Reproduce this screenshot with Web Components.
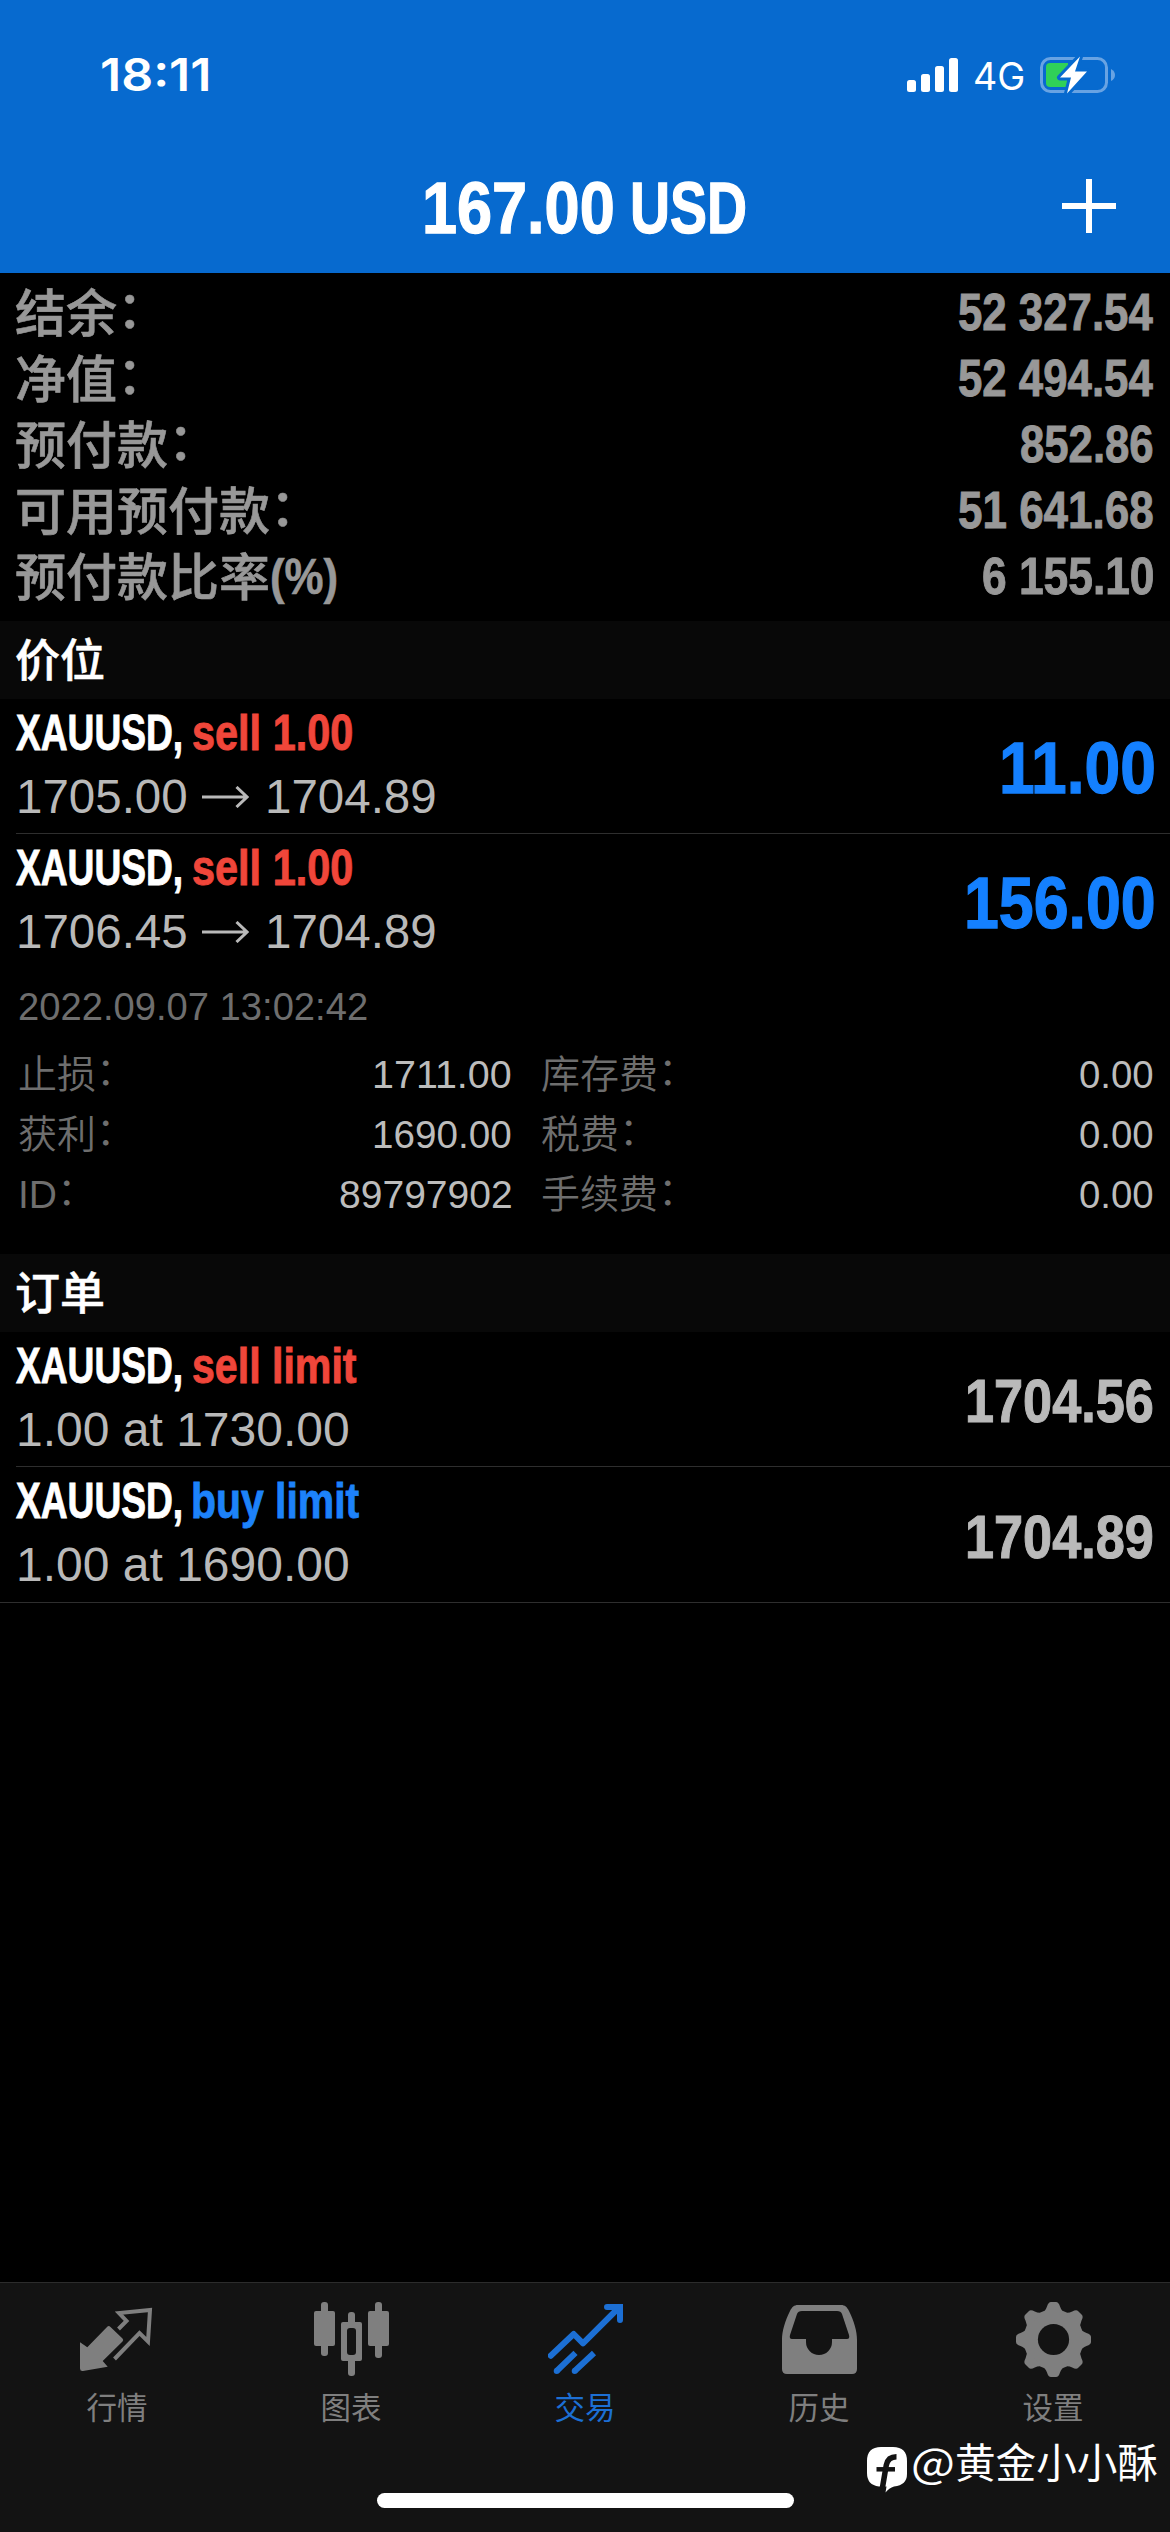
<!DOCTYPE html>
<html lang="zh-CN">
<head>
<meta charset="utf-8">
<title>Trade</title>
<style>
  html, body {
    margin: 0;
    background: #000;
  }

  body {
    font-family: "Liberation Sans", "Noto Sans CJK SC", sans-serif;
    width: 1170px;
    height: 2532px;
    overflow: hidden;
  }
</style>
</head>
<body>
<trade-screen></trade-screen>

<script>
const makeTemplate = (html) => {
  const template = document.createElement('template');
  template.innerHTML = html;
  return template;
};

const measureContext = document.createElement('canvas').getContext('2d');

// Text squeezed to a given ink width, the box is as wide as the ink.
class FitText extends HTMLElement {
  constructor() {
    super();
    this.attachShadow({ mode: 'open' });
    this.shadowRoot.innerHTML = `
      <style>
        :host{
          display: block;
          flex: none;
          white-space: nowrap;
        }

        span{
          display: inline-block;
          transform-origin: 0 0;
        }
      </style>
      <span><slot></slot></span>
    `;
  }

  connectedCallback() {
    const width = Number(this.getAttribute('width'));
    const $span = this.shadowRoot.querySelector('span');
    const style = getComputedStyle(this);
    measureContext.font = `${style.fontWeight} ${style.fontSize} ${style.fontFamily}`;

    const box = measureContext.measureText(this.textContent);
    const scale = width / (box.actualBoundingBoxLeft + box.actualBoundingBoxRight);
    this.style.width = `${width}px`;
    $span.style.marginLeft = `${box.actualBoundingBoxLeft * scale}px`;
    $span.style.transform = `scaleX(${scale})`;
  }
}

// Chinese label with an optional colon, raised to the middle of the line.
class FieldLabel extends HTMLElement {
  constructor() {
    super();
    this.attachShadow({ mode: 'open' });
    this.shadowRoot.innerHTML = `
      <style>
        :host{
          display: flex;
          white-space: nowrap;
        }

        .colon{
          display: none;
          transform: translateY(-0.07em);
        }

        :host([colon]) .colon{
          display: block;
        }
      </style>
      <slot></slot><span class="colon">：</span>
    `;
  }
}

class StatusBar extends HTMLElement {
  constructor() {
    super();
    this.attachShadow({ mode: 'open' });
    this.shadowRoot.innerHTML = `
      <style>
        :host{
          display: flex;
          align-items: center;
          height: 150px;
          box-sizing: border-box;
          padding: 0 55px 0 102px;
          color: #fff;
          font-family: Inter, sans-serif;
        }

        .time{
          font-size: 44.5px;
          font-weight: 600;
          margin-right: auto;
        }

        .net{
          font-size: 38px;
          font-weight: 400;
          margin: 2px 17px 0;
        }

        svg{
          display: block;
          flex: none;
        }
      </style>
      <fit-text class="time" width="106">18:11</fit-text>
      <svg width="51" height="34" fill="#fff">
        <rect x="0" y="22" width="9" height="12" rx="2.5"/>
        <rect x="14" y="16" width="9" height="18" rx="2.5"/>
        <rect x="28" y="8" width="9" height="26" rx="2.5"/>
        <rect x="42" y="0" width="9" height="34" rx="2.5"/>
      </svg>
      <fit-text class="net" width="48">4G</fit-text>
      <svg width="75" height="38" viewBox="0 0 75 38">
        <rect x="1.5" y="2.5" width="65" height="33" rx="9" fill="none" stroke="#68a3e3" stroke-width="3"/>
        <path d="M71 13 Q75 15 75 19 Q75 23 71 25Z" fill="#68a3e3"/>
        <path d="M10 7 H28 V31 H10 Q6 31 6 27 V11 Q6 7 10 7Z" fill="#30d158"/>
        <path d="M40 0.5 L20 21.5 H31 L27 37.5 L47 15.5 H35Z" fill="#fff" stroke="#076acf" stroke-width="6" stroke-linejoin="round" paint-order="stroke"/>
      </svg>
    `;
  }
}

class NavBar extends HTMLElement {
  constructor() {
    super();
    this.attachShadow({ mode: 'open' });
    this.shadowRoot.innerHTML = `
      <style>
        :host{
          display: grid;
          grid-template-columns: 1fr auto 1fr;
          align-items: center;
          height: 123px;
          box-sizing: border-box;
          padding: 0 54px 8px;
          color: #fff;
          font-size: 73px;
          font-weight: 700;
          line-height: 90px;
          -webkit-text-stroke: 0.018em currentColor;
        }

        .title{
          grid-column: 2;
          display: flex;
          gap: 21px;
        }

        svg{
          justify-self: end;
          margin-bottom: 3px;
        }
      </style>
      <div class="title"><slot></slot></div>
      <svg width="54" height="54" stroke="#fff" stroke-width="6">
        <path d="M27 0 V54 M0 27 H54"/>
      </svg>
    `;
  }
}

class SummaryRow extends HTMLElement {
  constructor() {
    super();
    this.attachShadow({ mode: 'open' });
    this.shadowRoot.innerHTML = `
      <style>
        :host{
          display: flex;
          justify-content: space-between;
          line-height: 66.1px;
          height: 66.1px;
          padding: 0 17px 0 15px;
          color: #989898;
          font-size: 52px;
          font-weight: 700;
          -webkit-text-stroke: 0.018em currentColor;
        }

        field-label{
          font-size: 51px;
          font-weight: 500;
          margin-top: 3px;
          -webkit-text-stroke: 0.012em currentColor;
        }
      </style>
      <field-label><slot name="label"></slot></field-label>
      <slot></slot>
    `;
    this.shadowRoot.querySelector('field-label').toggleAttribute('colon', !this.hasAttribute('plain'));
  }
}

class SectionTitle extends HTMLElement {
  constructor() {
    super();
    this.attachShadow({ mode: 'open' });
    this.shadowRoot.innerHTML = `
      <style>
        :host{
          display: block;
          height: 78px;
          box-sizing: border-box;
          padding: 2px 15px 0;
          background: #080808;
          color: #fff;
          font-size: 45px;
          font-weight: 500;
          line-height: 77px;
          -webkit-text-stroke: 0.012em currentColor;
        }
      </style>
      <slot></slot>
    `;
  }
}

class TradeRow extends HTMLElement {
  constructor() {
    super();
    this.attachShadow({ mode: 'open' });
    this.shadowRoot.innerHTML = `
      <style>
        :host{
          display: flex;
          justify-content: space-between;
          height: 135px;
          box-sizing: border-box;
          margin-left: 16px;
          padding: 2px 17px 0 0;
          border-bottom: 1px solid #2e2e2e;
          line-height: 64px;
        }

        :host([open]){
          border-bottom-color: transparent;
        }

        :host([last]){
          border-bottom: none;
        }

        .title, .detail{
          display: flex;
          height: 64px;
        }

        .title{
          gap: 12px;
          color: #fff;
          font-size: 50px;
          font-weight: 700;
          -webkit-text-stroke: 0.018em currentColor;
        }

        .detail{
          align-items: center;
          padding-left: 3px;
          color: #b9b9b9;
          font-size: 48px;
        }

        .value{
          align-self: center;
          padding-top: 2px;
          line-height: 100px;
          font-weight: 700;
          font-size: 62px;
          color: #b9b9b9;
          -webkit-text-stroke: 0.018em currentColor;
        }

        :host([profit]) .value{
          font-size: 73px;
          color: #1480ff;
        }

        .kind{
          color: #f0463a;
          -webkit-text-stroke: 0.018em currentColor;
        }

        :host([buy]) .kind{
          color: #1d82fa;
        }
      </style>
      <div>
        <div class="title"><fit-text width="165">XAUUSD,</fit-text><div class="kind"><slot name="kind"></slot></div></div>
        <div class="detail"><slot name="detail"></slot></div>
      </div>
      <div class="value"><slot name="value"></slot></div>
    `;
  }
}

class PriceArrow extends HTMLElement {
  constructor() {
    super();
    this.attachShadow({ mode: 'open' });
    this.shadowRoot.innerHTML = `
      <style>
        :host{
          display: block;
          margin: 0 19px 0 16px;
        }

        svg{
          display: block;
        }
      </style>
      <svg width="47" height="22" fill="none" stroke="currentColor" stroke-width="3">
        <path d="M0 11 H45 M34.5 1 L45 11 L34.5 21"/>
      </svg>
    `;
  }
}

class PositionDetails extends HTMLElement {
  constructor() {
    super();
    this.attachShadow({ mode: 'open' });
    this.shadowRoot.innerHTML = `
      <style>
        :host{
          display: block;
          height: 285px;
          box-sizing: border-box;
          padding: 8px 17px 0 18px;
          color: #6e6e6e;
          font-size: 39px;
          line-height: 60px;
        }

        .date{
          font-size: 38px;
          margin: 0 0 7.5px 1px;
        }

        .columns{
          display: grid;
          grid-template-columns: 493px 1fr;
          column-gap: 30px;
        }

        .columns > div{
          display: flex;
          justify-content: space-between;
        }

        field-label{
          font-weight: 350;
        }

        .columns fit-text{
          color: #bcbcbc;
        }
      </style>
      <fit-text class="date" width="348">2022.09.07 13:02:42</fit-text>
      <div class="columns">
        <div><field-label colon>止损</field-label><fit-text width="137">1711.00</fit-text></div>
        <div><field-label colon>库存费</field-label><fit-text width="73">0.00</fit-text></div>
        <div><field-label colon>获利</field-label><fit-text width="137">1690.00</fit-text></div>
        <div><field-label colon>税费</field-label><fit-text width="73">0.00</fit-text></div>
        <div><field-label colon>ID</field-label><fit-text width="171">89797902</fit-text></div>
        <div><field-label colon>手续费</field-label><fit-text width="73">0.00</fit-text></div>
      </div>
    `;
  }
}

const tooth = 'M25.5 11 Q29.5 9 31 4.5 Q32.3 0 35 0 H40 Q42.7 0 44 4.5 Q45.5 9 49.5 11Z';

const icons = {
  quotes: `
    <path d="M38.5 27 L46.5 19 L39 11 L70 8 L68 39.5 L59.5 31 L34.5 57" fill="none" stroke="currentColor" stroke-width="4"/>
    <path d="M27.5 24.5 Q29 23.5 30.5 25 L42.5 36.5 Q44 38 42.5 39.5 L22.7 59 L27.7 64.7 L3 69 Q0 69.3 0 66.5 V40.3 L7.3 45.3Z"/>`,
  chart: `
    <rect x="7" y="0" width="7" height="54" rx="3"/>
    <rect x="0" y="9" width="21" height="35" rx="2"/>
    <rect x="34" y="10" width="7" height="15" rx="3"/>
    <rect x="34" y="55" width="7" height="19" rx="3"/>
    <path fill-rule="evenodd" d="M29 20 H46 Q48 20 48 22 V57 Q48 59 46 59 H29 Q27 59 27 57 V22 Q27 20 29 20Z M36 26 Q33 26 33 29 V50 Q33 53 36 53 H39 Q42 53 42 50 V29 Q42 26 39 26Z"/>
    <rect x="61" y="0" width="7" height="56" rx="3"/>
    <rect x="54" y="9" width="21" height="35" rx="2"/>`,
  trade: `
    <g fill="none" stroke="currentColor" stroke-width="6">
      <path d="M2.7 53.7 L25.7 32 L35 41.3 L70 6.5" stroke-linecap="round" stroke-linejoin="round"/>
      <path d="M59 5 H72 V18" stroke-linecap="round"/>
      <path d="M8.7 69 L27.5 50.8 M26.7 69 L46 51"/>
    </g>
    <circle cx="8.7" cy="69" r="3"/>
    <circle cx="26.7" cy="69" r="3"/>`,
  history: `
    <path fill-rule="evenodd" d="M16 3 H59 C63 3 65 5 67 9 C72 19 75 29 75 38 V67 Q75 72 70 72 H5 Q0 72 0 67 V38 C0 29 3 19 8 9 C10 5 12 3 16 3Z
      M20 9 Q16 9 15 12 L8 33 Q7 37 10 37 H24 V40 A13 13 0 0 0 50 40 V37 H65 Q68 37 67 33 L60 12 Q59 9 55 9Z"/>`,
  settings: `
    <circle cx="37.5" cy="37.5" r="30"/>
    ${[0, 45, 90, 135, 180, 225, 270, 315].map((angle) => `<path d="${tooth}" transform="rotate(${angle} 37.5 37.5)"/>`).join('')}
    <circle cx="37.5" cy="37.5" r="15.6" fill="#131313"/>`,
};

class TabItem extends HTMLElement {
  constructor() {
    super();
    this.attachShadow({ mode: 'open' });
    this.shadowRoot.innerHTML = `
      <style>
        :host{
          display: flex;
          flex: 1;
          flex-direction: column;
          align-items: center;
          gap: 11px;
          color: #7f7f7f;
          font-size: 30.5px;
          line-height: 40px;
        }

        :host([active]){
          color: #1c6fd4;
        }

        svg{
          display: block;
          fill: currentColor;
        }
      </style>
      <svg width="75" height="75" viewBox="0 0 75 75">${icons[this.getAttribute('icon')]}</svg>
      <div><slot></slot></div>
    `;
  }
}

class TabBar extends HTMLElement {
  constructor() {
    super();
    this.attachShadow({ mode: 'open' });
    this.shadowRoot.innerHTML = `
      <style>
        :host{
          display: flex;
          flex-direction: column;
          justify-content: space-between;
          align-items: center;
          height: 250px;
          box-sizing: border-box;
          padding: 19px 0 24px;
          border-top: 1px solid #2c2c2c;
          background: #131313;
        }

        nav{
          display: flex;
          width: 100%;
        }

        .home{
          width: 417px;
          height: 15px;
          border-radius: 8px;
          background: #fff;
        }
      </style>
      <nav><slot></slot></nav>
      <div class="home"></div>
    `;
  }
}

class UserMark extends HTMLElement {
  constructor() {
    super();
    this.attachShadow({ mode: 'open' });
    this.shadowRoot.innerHTML = `
      <style>
        /* floats over the tab bar */
        :host{
          position: absolute;
          left: 867px;
          top: 2433px;
          display: flex;
          align-items: flex-start;
          gap: 6px;
          color: #fff;
          font-family: "Noto Sans CJK SC", sans-serif;
          font-size: 40.5px;
          line-height: 56px;
        }

        svg{
          display: block;
          margin-top: 14px;
        }

        .text{
          display: flex;
          gap: 5px;
        }
      </style>
      <svg width="40" height="46">
        <path d="M14 0 H26 Q40 0 40 14 V27 Q40 38 27 39.5 Q22 41 18.5 45.5 L19.5 39.5 H12 Q0 38 0 26 V14 Q0 0 14 0Z" fill="#fff"/>
        <path d="M15.3 41.5 L19.3 18 Q21 9.7 29.5 9.7" fill="none" stroke="#131313" stroke-width="5.5"/>
        <path d="M9.5 22.3 H28" stroke="#131313" stroke-width="4.5"/>
      </svg>
      <div class="text"><fit-text width="39">@</fit-text><fit-text width="200.5">黄金小小酥</fit-text></div>
    `;
  }
}

const screenTemplate = makeTemplate(`
<style>
  :host{
    display: flex;
    flex-direction: column;
    position: relative;
    width: 1170px;
    height: 2532px;
    overflow: hidden;
    background: #000;
  }

  header{
    background: #076acf;
  }

  .summary{
    height: 348px;
    box-sizing: border-box;
    padding-top: 6px;
  }

  .orders{
    border-bottom: 1px solid #2e2e2e;
  }

  .percent{
    font-weight: 700;
    font-size: 50px;
    margin: -2px 0 0 2px;
  }

  tab-bar{
    margin-top: auto;
  }
</style>
<header>
  <status-bar></status-bar>
  <nav-bar><fit-text width="187">167.00</fit-text> <fit-text width="112">USD</fit-text></nav-bar>
</header>
<div class="summary">
  <summary-row><span slot="label">结余</span><fit-text width="194">52 327.54</fit-text></summary-row>
  <summary-row><span slot="label">净值</span><fit-text width="194">52 494.54</fit-text></summary-row>
  <summary-row><span slot="label">预付款</span><fit-text width="132">852.86</fit-text></summary-row>
  <summary-row><span slot="label">可用预付款</span><fit-text width="194">51 641.68</fit-text></summary-row>
  <summary-row plain><span slot="label">预付款比率</span><fit-text slot="label" class="percent" width="65">(%)</fit-text><fit-text width="170">6 155.10</fit-text></summary-row>
</div>
<section-title>价位</section-title>
<trade-row profit>
  <fit-text slot="kind" width="159">sell 1.00</fit-text>
  <fit-text slot="detail" width="167">1705.00</fit-text><price-arrow slot="detail"></price-arrow><fit-text slot="detail" width="167">1704.89</fit-text>
  <fit-text slot="value" width="151">11.00</fit-text>
</trade-row>
<trade-row profit open>
  <fit-text slot="kind" width="159">sell 1.00</fit-text>
  <fit-text slot="detail" width="167">1706.45</fit-text><price-arrow slot="detail"></price-arrow><fit-text slot="detail" width="167">1704.89</fit-text>
  <fit-text slot="value" width="186">156.00</fit-text>
</trade-row>
<position-details></position-details>
<section-title>订单</section-title>
<div class="orders">
  <trade-row>
    <fit-text slot="kind" width="164">sell limit</fit-text>
    <fit-text slot="detail" width="329">1.00 at 1730.00</fit-text>
    <fit-text slot="value" width="185">1704.56</fit-text>
  </trade-row>
  <trade-row buy last>
    <fit-text slot="kind" width="166">buy limit</fit-text>
    <fit-text slot="detail" width="329">1.00 at 1690.00</fit-text>
    <fit-text slot="value" width="185">1704.89</fit-text>
  </trade-row>
</div>
<tab-bar>
  <tab-item icon="quotes">行情</tab-item>
  <tab-item icon="chart">图表</tab-item>
  <tab-item icon="trade" active>交易</tab-item>
  <tab-item icon="history">历史</tab-item>
  <tab-item icon="settings">设置</tab-item>
</tab-bar>
<user-mark></user-mark>
`);

class TradeScreen extends HTMLElement {
  constructor() {
    super();
    this.attachShadow({ mode: 'open' });
    this.shadowRoot.appendChild(screenTemplate.content.cloneNode(true));
  }
}

customElements.define('field-label', FieldLabel);
customElements.define('status-bar', StatusBar);
customElements.define('nav-bar', NavBar);
customElements.define('summary-row', SummaryRow);
customElements.define('section-title', SectionTitle);
customElements.define('trade-row', TradeRow);
customElements.define('price-arrow', PriceArrow);
customElements.define('position-details', PositionDetails);
customElements.define('tab-item', TabItem);
customElements.define('tab-bar', TabBar);
customElements.define('user-mark', UserMark);
customElements.define('trade-screen', TradeScreen);
// last, so every text is already styled when it is measured
customElements.define('fit-text', FitText);
</script>
</body>
</html>
